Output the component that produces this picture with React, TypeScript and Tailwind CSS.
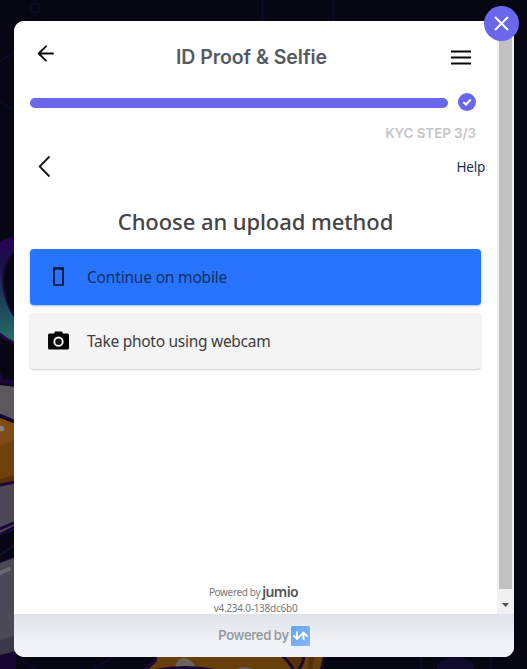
import React from "react";

function Backdrop() {
  return (
    <svg className="absolute inset-0" width="527" height="669" viewBox="0 0 527 669" fill="none" aria-hidden="true">
      <defs>
        <linearGradient id="ring" x1="0" y1="240" x2="0" y2="340" gradientUnits="userSpaceOnUse">
          <stop stopColor="#25054f" />
          <stop offset="0.300" stopColor="#1a1450" />
          <stop offset="0.600" stopColor="#1c3f5c" />
          <stop offset="1" stopColor="#246c66" />
        </linearGradient>
      </defs>
      <rect width="527" height="669" fill="#070613" />
      <g stroke="#100c32" strokeWidth="1.4">
        <circle cx="35.3" cy="8" r="4.6" />
        <path d="M0 61L16 52M0 102L16 112M262.500 0V22M333 0V22M35 20V24" />
      </g>
      <path d="M0 242Q7 237 16 237V344Q7 340 0 333Z" fill="url(#ring)" />
      <path d="M16 250Q3 260 3 281Q4 302 16 319" fill="#080613" stroke="#1b0838" strokeWidth="2" />
      <path d="M0 334Q7 340 16 344" stroke="#24064a" strokeWidth="2.500" />
      <path d="M0 373L4 379L16 380V386L0 383Z" fill="#1b0638" />
      <path d="M0 385L16 387V421L0 415Z" fill="#5c5661" />
      <path d="M0 415L16 422" stroke="#1d053d" strokeWidth="2.500" />
      <path d="M0 418L16 424V481L0 483Z" fill="#7f4a16" />
      <path d="M0 446L16 438V481L0 483Z" fill="#70400f" />
      <path d="M0 479L16 475V481L0 484Z" fill="#5b3008" />
      <circle cx="1.500" cy="428.500" r="2.700" fill="#87847e" />
      <path d="M0 485L16 482V525L0 533Z" fill="#4c4655" />
      <path d="M0 485L16 482M0 529L16 522M0 535L16 528M0 561L16 555" stroke="#1d053d" strokeWidth="3" />
      <path d="M0 536L16 530V556L0 561Z" fill="#080615" />
      <path d="M0 555L16 544" stroke="#121035" strokeWidth="2" />
      <path d="M0 563L16 557V652L0 657Z" fill="#4b4955" />
      <path d="M0 573L9 569" stroke="#6a6772" strokeWidth="4" strokeLinecap="round" />
      <path d="M0 640L16 635V651L0 656Z" fill="#3b3849" />
      <path d="M0 655L16 651V669H0Z" fill="#180431" />
      <path d="M15 657L36 669M93 669L115 656M421 656V669M491 656V669" stroke="#100d35" strokeWidth="1.400" />
      <path d="M437 669V664L457 654L474 664V669Z" fill="#100b2b" />
      <path d="M143 669L157 656H326L323 669Z" fill="#1c0634" />
      <path d="M149 669L157 661V656H323L320 669Z" fill="#673f0b" />
      <path d="M286 656H306L300 669H294Z" fill="#563008" />
      <path d="M282 656Q288 660 293 669M304 656Q303 664 299 669" stroke="#1c0634" strokeWidth="3" />
      <path d="M312 656L310 669" stroke="#543008" strokeWidth="5" />
      <path d="M174 669Q177 658 184 658Q191 658 197 669ZM237 669Q244 665 252 669Z" fill="#68645c" />
      <path d="M155 669Q184 663 216 669Z" fill="#1c0634" />
    </svg>
  );
}

const system = "font-['Noto_Sans','Open_Sans',sans-serif]";
const brand = "font-['Inter','Liberation_Sans',sans-serif]";

function PhoneIcon() {
  return (
    <svg width="11" height="19" viewBox="0 0 11 19" fill="none">
      <path d="M1 1H10V18H1Z" stroke="#04122a" strokeWidth="1.700" />
      <path d="M1 1H10V3H8L7.500 2.500H3.500L3 3H1Z" fill="#04122a" />
    </svg>
  );
}

function CameraIcon() {
  return (
    <svg width="21" height="19" viewBox="0 0 21 19">
      <path d="M1.500 2.500H6L7 0.500H14L15 2.500H19.500Q21 2.500 21 4V17Q21 18.500 19.500 18.500H1.500Q0 18.500 0 17V4Q0 2.500 1.500 2.500Z" fill="#050505" />
      <circle cx="10.500" cy="10.700" r="4.200" fill="#111" stroke="#f4f4f4" strokeWidth="1.900" />
    </svg>
  );
}

export default function App() {
  return (
    <main className="relative h-[669px] w-[527px] overflow-hidden pt-[21px] pl-[14px]">
      <Backdrop />
      <section className="relative flex h-[636px] w-[500px] flex-col overflow-hidden rounded-[10px] bg-[#eff3f7]">
        <div className="flex h-[593px] shrink-0 bg-white">
          <div className="flex w-[483px] flex-col">
            <header className="flex h-[73px] items-start pr-[26px] pl-[23px]">
              <svg className="mt-[24px] shrink-0" width="18" height="18" viewBox="0 0 18 18" fill="none" stroke="#080808" strokeWidth="1.800" strokeLinecap="round" strokeLinejoin="round">
                <path d="M16 8.500H2M9 1.300L1.700 8.500L9 15.700" />
              </svg>
              <h1 className={`${brand} mt-[22px] flex-1 pr-[3px] text-center text-[19.500px] leading-[29px] font-semibold tracking-[-0.050px] whitespace-nowrap text-[#555a61]`}>ID Proof &amp; Selfie</h1>
              <svg className="mt-[28px] shrink-0" width="20" height="17" viewBox="0 0 20 17" stroke="#080808" strokeWidth="2">
                <path d="M0 2.500H20M0 8.500H20M0 14.500H20" />
              </svg>
            </header>
            <div className="flex h-[31px] pl-4">
              <div className="mt-[4.400px] h-[10px] w-[418px] rounded-full bg-[#6967ea]" />
              <svg className="-mt-[1.500px] ml-[10px]" width="18" height="18" viewBox="0 0 18 18" fill="none">
                <circle cx="9" cy="9" r="9" fill="#6967ea" />
                <path d="M5.300 9.200L8 11.500L12.700 6.500" stroke="white" strokeWidth="2" />
              </svg>
            </div>
            <div className={`${brand} h-[30px] pt-px pr-[21px] text-right text-[13.500px] leading-[14px] font-semibold tracking-[-0.120px] whitespace-nowrap text-[#c4c4c6]`}>KYC STEP 3/3</div>
            <div className="flex h-[40px] justify-between pr-3 pl-[24px]">
              <svg width="14" height="23" viewBox="0 0 14 23" fill="none" stroke="#181818" strokeWidth="1.900">
                <path d="M11.500 1.500L1.700 11.500L11.500 21.500" />
              </svg>
              <span className={`${system} pt-px text-[13.500px] leading-[23px] tracking-[-0.250px] text-[#17304b]`}>Help</span>
            </div>
            <h2 className={`${system} h-[53.500px] pt-[10px] text-center text-[22px] leading-[32px] font-medium tracking-[-0.080px] whitespace-nowrap text-[#444]`}>Choose an upload method</h2>
            <div className="flex flex-col gap-2 pl-4">
              <button className="flex h-14 w-[451px] items-center rounded-[4px] bg-[#2874ff] shadow-[0_1px_2px_#2874ff80]">
                <span className="flex w-[57px] justify-center"><PhoneIcon /></span>
                <span className={`${system} pt-[3px] text-[15.500px] tracking-[-0.180px] whitespace-nowrap text-[#102f61]`}>Continue on mobile</span>
              </button>
              <button className="flex h-14 w-[451px] items-center rounded-[4px] bg-[#f4f4f4] shadow-[0_1px_2px_#0003]">
                <span className="flex w-[57px] justify-center"><CameraIcon /></span>
                <span className={`${system} pt-[3px] text-[15.500px] tracking-[-0.280px] whitespace-nowrap text-[#3c3c3c]`}>Take photo using webcam</span>
              </button>
            </div>
            <footer className={`${system} mt-auto flex h-[31px] flex-col items-center text-[10px] leading-[15px] text-[#777]`}>
              <div className="flex h-[17px] items-center gap-[2px] pt-px pr-[4px] whitespace-nowrap"><span className="pt-px tracking-[-0.350px]">Powered by</span><span className="text-[14px] leading-[14px] font-semibold tracking-[-0.600px] text-[#555]">jumio</span></div>
              <div className="pt-px leading-[14px] tracking-[-0.250px] whitespace-nowrap">v4.234.0-138dc6b0</div>
            </footer>
          </div>
          <div className="flex w-[17px] flex-col items-center bg-[#f1f1f1]">
            <div className="h-[568px] w-[13px] bg-[#c1c1c1]" />
            <svg className="mt-[14px]" width="7" height="5" viewBox="0 0 7 5"><path d="M0 0H7L3.500 4Z" fill="#505050" /></svg>
          </div>
        </div>
        <footer className="flex flex-1 items-center justify-center gap-[2px] bg-linear-to-b from-[#dfe3e8] to-[#eff3f7] to-60%">
          <span className={`${brand} text-[13px] font-semibold tracking-[-0.350px] whitespace-nowrap text-[#979ba0]`}>Powered by</span>
          <svg width="19" height="20" viewBox="0 0 19 20" fill="none">
            <defs><linearGradient id="tile" x1="0" y1="0" x2="1" y2="1"><stop stopColor="#65a5ed" /><stop offset="1" stopColor="#83b9f4" /></linearGradient></defs>
            <rect width="19" height="20" rx="1.500" fill="url(#tile)" />
            <path d="M6 5.500V13M2.500 9.500L6 13L12.500 6.500L16.500 10.500M12.500 7V14" stroke="white" strokeWidth="1.900" />
          </svg>
        </footer>
      </section>
      <button aria-label="Close" className="absolute top-[6px] left-[484px] flex size-[35px] items-center justify-center rounded-full bg-[#6967ea]">
        <svg width="15" height="15" viewBox="0 0 15 15" stroke="white" strokeWidth="2" strokeLinecap="round"><path d="M1.500 1.500L13.500 13.500M13.500 1.500L1.500 13.500" /></svg>
      </button>
    </main>
  );
}
